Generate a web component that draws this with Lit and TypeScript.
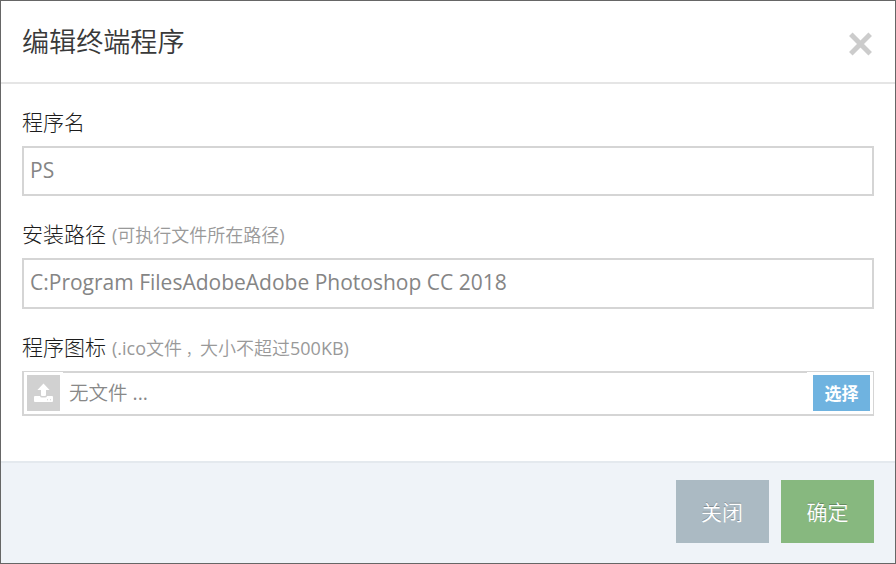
import { LitElement, html, css } from "lit";
import { customElement } from "lit/decorators.js";

@customElement("app-root")
export class AppRoot extends LitElement {
  static styles = css`
    :host {
      display: flex;
      flex-direction: column;
      box-sizing: border-box;
      width: 896px;
      height: 564px;
      border: 1px solid #666;
      background: #fff;
      color: #1c1c1c;
      font-family: "Open Sans", "Noto Sans CJK SC", sans-serif;
      font-size: 21px;
      overflow: hidden;
    }
    * {
      box-sizing: border-box;
    }
    header {
      display: flex;
      justify-content: space-between;
      align-items: center;
      height: 83px;
      padding: 0 22px 0 21px;
      border-bottom: 2px solid #e5e5e5;
    }
    h4 {
      margin: 0;
      font-size: 27.1px;
      font-weight: 350;
      line-height: 40px;
      color: #393939;
    }
    .close {
      display: block;
      width: 25px;
      height: 24px;
      margin-top: 5px;
      padding: 0;
      border: 0;
      background: none;
    }
    svg {
      display: block;
    }
    main {
      flex: 1;
      padding: 21px 21px 0;
    }
    .label {
      display: flex;
      align-items: center;
      gap: 6px;
      height: 31px;
      font-weight: 300;
      white-space: nowrap;
    }
    .hint {
      color: #999;
      font-size: 18px;
      font-weight: 350;
      padding-top: 3px;
    }
    .lat {
      font-weight: 400;
    }
    .comma {
      padding-left: 4px;
      font-size: 14px;
    }
    .field {
      display: block;
      width: 100%;
      height: 50px;
      margin: 10px 0 21px;
      padding: 0 6px 2px;
      border: 2px solid #d5d5d5;
      border-radius: 0;
      color: #858585;
      background: #fff;
      font: 400 21px "Open Sans", "Noto Sans CJK SC", sans-serif;
      outline: none;
    }
    .field.path {
      height: 51px;
      padding-bottom: 4px;
    }
    .file {
      display: flex;
      height: 45px;
      margin-top: 10px;
      border: 2px solid #d5d5d5;
      color: #888;
      font-size: 19.5px;
      font-weight: 350;
    }
    .cap {
      margin-top: -1px;
      height: 42px;
      background: #fff;
      padding: 3px;
    }
    .cap.start {
      width: 39px;
    }
    .cap.end {
      width: 66px;
      margin-left: auto;
      margin-right: -1px;
      padding: 3px 3px 3px 6px;
    }
    .icon {
      display: grid;
      place-items: center;
      width: 33px;
      height: 36px;
      background: #d1d1d1;
    }
    .name {
      padding-left: 6px;
      line-height: 40px;
    }
    .pick {
      width: 57px;
      height: 36px;
      background: #6fb3e0;
      color: #fff;
      font-size: 17px;
      font-weight: 700;
      line-height: 37px;
      text-align: center;
    }
    footer {
      display: flex;
      justify-content: flex-end;
      gap: 12px;
      height: 102px;
      padding: 17px 21px 0;
      border-top: 2px solid #e4e9ee;
      background: #eff3f8;
    }
    .btn {
      width: 93px;
      height: 63px;
      padding: 0 1px 2px 0;
      border: 0;
      color: #fff;
      background: #abbac3;
      font: 350 21px "Open Sans", "Noto Sans CJK SC", sans-serif;
      text-shadow: 0 -1px 0 rgba(0, 0, 0, 0.25);
    }
    .btn.ok {
      padding-right: 0;
      background: #87b87f;
    }
  `;

  render() {
    return html`
      <header>
        <h4>编辑终端程序</h4>
        <button class="close" aria-label="关闭">
          <svg width="25" height="24" viewBox="0 0 25 24">
            <path d="M2.8 2.3 22.2 21.7M22.2 2.3 2.8 21.7" stroke="#ccc" stroke-width="5" />
          </svg>
        </button>
      </header>
      <main>
        <div class="label">程序名</div>
        <input class="field" value="PS" />
        <div class="label">安装路径<span class="hint"
            ><span class="lat">(</span>可执行文件所在路径<span class="lat">)</span></span
          ></div>
        <input class="field path" value="C:Program FilesAdobeAdobe Photoshop CC 2018" />
        <div class="label">
          程序图标<span class="hint"
            ><span class="lat">(.ico</span>文件<span class="comma">，</span>大小不超过<span class="lat">500KB)</span></span
          >
        </div>
        <div class="file">
          <div class="cap start">
            <div class="icon">
              <svg width="19" height="20" viewBox="0 0 19 20">
                <path
                  fill="#fff"
                  d="M9.5 0.5 15.6 7H12V12Q12 13 11 13H8Q7 13 7 12V7H3.4ZM1 13H6Q6.2 14.5 8 14.5H11Q12.8 14.5 13 13H18Q19 13 19 14V18Q19 19 18 19H1Q0 19 0 18V14Q0 13 1 13Z"
                />
                <path fill="#d1d1d1" d="M13 16.3h1v1h-1zM16 16.3h1v1h-1z" />
              </svg>
            </div>
          </div>
          <span class="name">无文件 <span class="lat">...</span></span>
          <div class="cap end"><div class="pick">选择</div></div>
        </div>
      </main>
      <footer>
        <button class="btn">关闭</button>
        <button class="btn ok">确定</button>
      </footer>
    `;
  }
}
